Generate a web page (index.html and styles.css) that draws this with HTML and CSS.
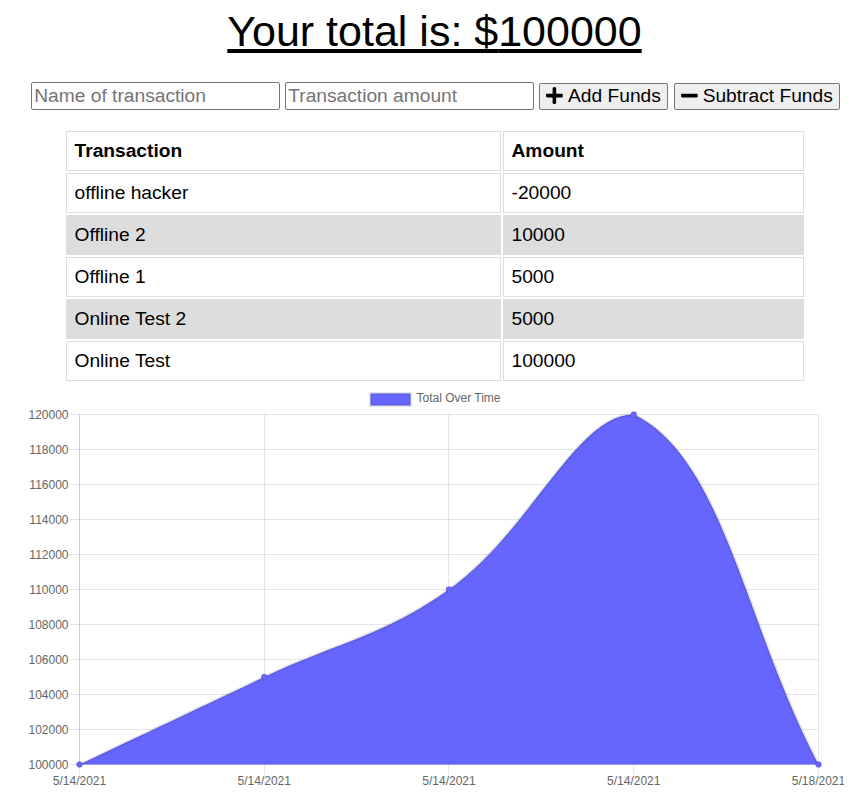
FILE: index.html
```html
<!DOCTYPE html>
<html lang="en">
<head>
<meta charset="utf-8">
<title>Budget Tracker</title>
<link rel="stylesheet" href="styles.css">
</head>
<body>
<h1 class="total">Your total is: $<span class="total-amount">100000</span></h1>

<div class="form">
  <input type="text" class="field" placeholder="Name of transaction">
  <input type="text" class="field" placeholder="Transaction amount">
  <button class="btn" type="button"><svg class="icon" viewBox="0 0 448 512" aria-hidden="true"><path d="M416 208H272V64c0-17.67-14.330-32-32-32h-32c-17.67 0-32 14.33-32 32v144H32c-17.67 0-32 14.33-32 32v32c0 17.67 14.33 32 32 32h144v144c0 17.67 14.33 32 32 32h32c17.67 0 32-14.33 32-32V304h144c17.67 0 32-14.33 32-32v-32c0-17.67-14.33-32-32-32z"/></svg><span>Add Funds</span></button>
  <button class="btn btn-sub" type="button"><svg class="icon" viewBox="0 0 448 512" aria-hidden="true"><path d="M416 208H32c-17.67 0-32 14.33-32 32v32c0 17.67 14.33 32 32 32h384c17.67 0 32-14.33 32-32v-32c0-17.67-14.33-32-32-32z"/></svg><span>Subtract Funds</span></button>
</div>

<table class="tx">
  <thead>
    <tr><th>Transaction</th><th>Amount</th></tr>
  </thead>
  <tbody>
    <tr><td>offline hacker</td><td>-20000</td></tr>
    <tr><td>Offline 2</td><td>10000</td></tr>
    <tr><td>Offline 1</td><td>5000</td></tr>
    <tr><td>Online Test 2</td><td>5000</td></tr>
    <tr><td>Online Test</td><td>100000</td></tr>
  </tbody>
</table>

<svg class="chart" viewBox="25 383 819 412" width="819" height="412">
  <!-- legend -->
  <rect class="legend-box" x="370.5" y="393.5" width="40" height="12"/>
  <text class="tick" x="416.5" y="402">Total Over Time</text>

  <!-- grid -->
  <g class="grid">
    <line x1="69.5" y1="414.5" x2="818.5" y2="414.5"/>
    <line x1="69.5" y1="449.5" x2="818.5" y2="449.5"/>
    <line x1="69.5" y1="484.5" x2="818.5" y2="484.5"/>
    <line x1="69.5" y1="519.5" x2="818.5" y2="519.5"/>
    <line x1="69.5" y1="554.5" x2="818.5" y2="554.5"/>
    <line x1="69.5" y1="589.5" x2="818.5" y2="589.5"/>
    <line x1="69.5" y1="624.5" x2="818.5" y2="624.5"/>
    <line x1="69.5" y1="659.5" x2="818.5" y2="659.5"/>
    <line x1="69.5" y1="694.5" x2="818.5" y2="694.5"/>
    <line x1="69.5" y1="729.5" x2="818.5" y2="729.5"/>
    <line x1="69.5" y1="764.5" x2="818.5" y2="764.5"/>
    <line x1="79.5" y1="414.5" x2="79.5" y2="774.5"/>
    <line x1="264.5" y1="414.5" x2="264.5" y2="774.5"/>
    <line x1="448.5" y1="414.5" x2="448.5" y2="774.5"/>
    <line x1="633.5" y1="414.5" x2="633.5" y2="774.5"/>
    <line x1="818.5" y1="414.5" x2="818.5" y2="774.5"/>
    <line x1="79.5" y1="414.5" x2="79.5" y2="764.5"/>
    <line x1="79.5" y1="764.5" x2="818.5" y2="764.5"/>
  </g>

  <!-- y labels -->
  <g class="tick ylab">
    <text x="68.5" y="418.5">120000</text>
    <text x="68.5" y="453.5">118000</text>
    <text x="68.5" y="488.5">116000</text>
    <text x="68.5" y="523.5">114000</text>
    <text x="68.5" y="558.5">112000</text>
    <text x="68.5" y="593.5">110000</text>
    <text x="68.5" y="628.5">108000</text>
    <text x="68.5" y="663.5">106000</text>
    <text x="68.5" y="698.5">104000</text>
    <text x="68.5" y="733.5">102000</text>
    <text x="68.5" y="768.5">100000</text>
  </g>

  <!-- x labels -->
  <g class="tick xlab">
    <text x="79.5" y="785">5/14/2021</text>
    <text x="264.25" y="785">5/14/2021</text>
    <text x="449" y="785">5/14/2021</text>
    <text x="633.75" y="785">5/14/2021</text>
    <text x="818.5" y="785">5/18/2021</text>
  </g>

  <!-- area -->
  <path class="area" d="M79.5,764.5 C153.4,729.5 190.35,712 264.25,677 C338.15,642 383.16,636.28 449,589.5 C530.96,531.28 575.89,414.5 633.75,414.5 C723.69,457.1 744.6,624.5 818.5,764.5 Z"/>
  <path class="line" d="M79.5,764.5 C153.4,729.5 190.35,712 264.25,677 C338.15,642 383.16,636.28 449,589.5 C530.96,531.28 575.89,414.5 633.75,414.5 C723.69,457.1 744.6,624.5 818.5,764.5"/>

  <!-- points -->
  <g class="pts">
    <circle cx="79.5" cy="764.5" r="3"/>
    <circle cx="264.25" cy="677" r="3"/>
    <circle cx="449" cy="589.5" r="3"/>
    <circle cx="633.75" cy="414.5" r="3"/>
    <circle cx="818.5" cy="764.5" r="3"/>
  </g>
</svg>
</body>
</html>
```

FILE: styles.css
```css
body {
  margin: 7px 8px 0 25px;
  font-family: "Liberation Sans", Arial, Helvetica, sans-serif;
  color: #000;
  background: #fff;
}

.total {
  margin: 0;
  font-size: 43px;
  font-weight: normal;
  line-height: normal;
  text-align: center;
  text-decoration: underline;
  text-decoration-skip-ink: auto;
}

.form {
  display: flex;
  justify-content: center;
  align-items: center;
  gap: 5px;
  margin-top: 26px;
  padding-left: 2px;
}

.field {
  box-sizing: border-box;
  width: 249px;
  height: 28px;
  padding: 1px 2px;
  border: 1px solid #767676;
  border-radius: 2px;
  font-family: "Liberation Sans", Arial, sans-serif;
  font-size: 19.2px;
  color: #000;
  background: #fff;
}

.field::placeholder {
  color: #757575;
}

.btn {
  box-sizing: border-box;
  display: inline-flex;
  align-items: center;
  gap: 5px;
  height: 27px;
  padding: 0 6px;
  border: 1px solid #767676;
  border-radius: 2px;
  background: #efefef;
  color: #000;
  font-family: "Liberation Sans", Arial, sans-serif;
  font-size: 19.2px;
  line-height: 22px;
}

.btn-sub {
  margin-left: 1px;
}

.icon {
  width: 16.8px;
  height: 19.2px;
  fill: #000;
  flex: none;
}

.tx {
  width: 742px;
  margin: 19px auto 0;
  border-spacing: 2px;
  font-size: 19.2px;
}

.tx th,
.tx td {
  border: 1px solid #ddd;
  padding: 8px;
  text-align: left;
}

.tx th:first-child {
  width: 417px;
}

.tx tbody tr:nth-child(even) td {
  background: #ddd;
}

.chart {
  display: block;
  width: 819px;
  height: 412px;
}

.chart .tick {
  font-family: "Liberation Sans", Arial, Helvetica, sans-serif;
  font-size: 12px;
  fill: #666;
}

.chart .ylab {
  text-anchor: end;
}

.chart .xlab {
  text-anchor: middle;
}

.chart .grid line {
  stroke: rgba(0, 0, 0, 0.1);
  stroke-width: 1;
}

.chart .legend-box {
  fill: #6666ff;
  stroke: rgba(0, 0, 0, 0.1);
  stroke-width: 3;
}

.chart .area {
  fill: #6666ff;
}

.chart .line {
  fill: none;
  stroke: rgba(0, 0, 0, 0.1);
  stroke-width: 3;
}

.chart .pts circle {
  fill: #6666ff;
  stroke: rgba(0, 0, 0, 0.1);
  stroke-width: 1;
}
```
